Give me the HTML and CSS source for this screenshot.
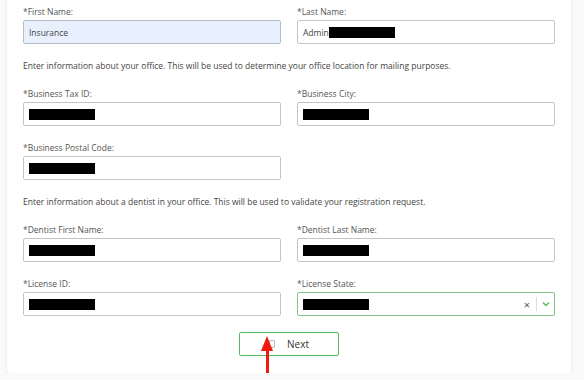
FILE: index.html
```html
<!DOCTYPE html>
<html>
  <head>
    <title>Registration</title>
    <link rel="stylesheet" href="styles.css">
  </head>
  <body>
    <div class="card">
      <div class="form-grid">
        <div class="field">
          <label>*First Name:</label>
          <div class="input autofill">Insurance</div>
        </div>
        <div class="field">
          <label>*Last Name:</label>
          <div class="input">Admin<span class="redact"></span></div>
        </div>

        <p class="note">Enter information about your office. This will be used to determine your office location for mailing purposes.</p>

        <div class="field">
          <label>*Business Tax ID:</label>
          <div class="input"><span class="redact"></span></div>
        </div>
        <div class="field">
          <label>*Business City:</label>
          <div class="input"><span class="redact"></span></div>
        </div>
        <div class="field">
          <label>*Business Postal Code:</label>
          <div class="input"><span class="redact"></span></div>
        </div>
        <div></div>

        <p class="note">Enter information about a dentist in your office. This will be used to validate your registration request.</p>

        <div class="field">
          <label>*Dentist First Name:</label>
          <div class="input"><span class="redact"></span></div>
        </div>
        <div class="field">
          <label>*Dentist Last Name:</label>
          <div class="input"><span class="redact"></span></div>
        </div>
        <div class="field">
          <label>*License ID:</label>
          <div class="input"><span class="redact"></span></div>
        </div>
        <div class="field">
          <label>*License State:</label>
          <div class="input select">
            <span class="redact"></span>
            <span class="clear">&times;</span>
            <span class="sep"></span>
            <svg class="chev" width="8" height="6" viewBox="0 0 8 6"><path d="M1 1.5 L4 4.5 L7 1.5" fill="none" stroke="#5cb85c" stroke-width="1.4"/></svg>
          </div>
        </div>
      </div>
      <div class="actions">
        <button class="btn-next"><span class="btn-icon"></span>Next</button>
        <div class="arrow">
          <div class="arrow-head"></div>
          <div class="arrow-shaft"></div>
        </div>
      </div>
    </div>
  </body>
</html>
```

FILE: styles.css
```css
body{
  margin: 0;
  background-color: #fafafa;
  font-family: "Open Sans", "Liberation Sans", sans-serif;
  color: #444;
  overflow: hidden;
}

.card{
  margin: -20px 13px 0 7px;
  padding: 26px 16px 17px 16px;
  background-color: #fff;
  box-shadow: 0 1px 3px rgba(0, 0, 0, 0.12);
  border-radius: 3px;
}

.form-grid{
  display: grid;
  grid-template-columns: 1fr 1fr;
  column-gap: 16px;
  row-gap: 16px;
}

.field label{
  display: block;
  font-size: 8.5px;
  line-height: 12px;
  height: 12px;
  margin-bottom: 2px;
  color: #555;
}

.input{
  box-sizing: border-box;
  height: 24px;
  border: 1px solid #c4c4c4;
  border-radius: 2px;
  display: flex;
  align-items: center;
  padding-left: 5px;
  font-size: 8.5px;
  color: #444;
}

.autofill{
  background-color: #e8f0fe;
  border-color: #b8bcc8;
}

.redact{
  display: inline-block;
  width: 66px;
  height: 11px;
  background-color: #000;
}

.select{
  border: 1.5px solid #86c586;
  padding-right: 4px;
}

.select .clear{
  margin-left: auto;
  font-size: 11px;
  color: #555;
}

.select .sep{
  width: 1px;
  height: 14px;
  background-color: #ddd;
  margin: 0 5px 0 6px;
}

.note{
  grid-column: 1 / 3;
  margin: 0;
  font-size: 8.5px;
  line-height: 12px;
  color: #444;
}

.actions{
  position: relative;
  display: flex;
  justify-content: center;
  margin-top: 16px;
}

.btn-next{
  display: flex;
  align-items: center;
  justify-content: center;
  width: 100px;
  height: 24px;
  background: #fff;
  border: 1px solid #5cb85c;
  border-radius: 2px;
  font-family: "Open Sans", "Liberation Sans", sans-serif;
  font-size: 10px;
  color: #333;
}

.btn-icon{
  display: inline-block;
  width: 4px;
  height: 6px;
  border: 1px solid #bbb;
  border-radius: 1px;
  margin-right: 12px;
}

.arrow{
  position: absolute;
  left: 238px;
  top: 4px;
  width: 12px;
  display: flex;
  flex-direction: column;
  align-items: center;
}

.arrow-head{
  width: 0;
  height: 0;
  border-left: 6px solid transparent;
  border-right: 6px solid transparent;
  border-bottom: 15px solid #f0190f;
}

.arrow-shaft{
  width: 3px;
  height: 28px;
  background-color: #f0190f;
}
```
